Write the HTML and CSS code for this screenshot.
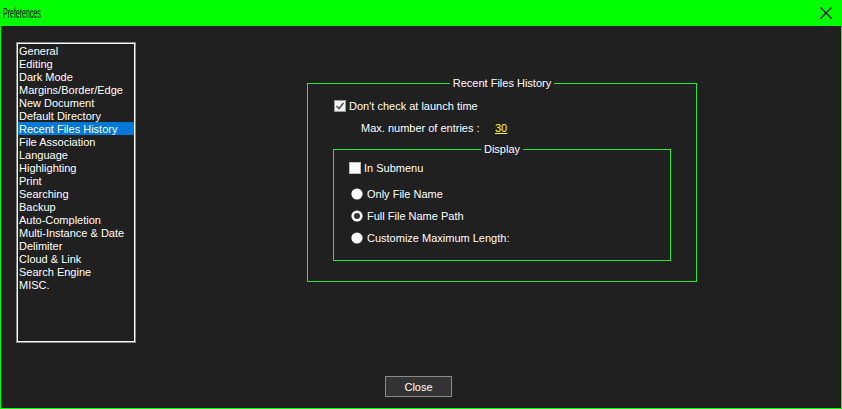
FILE: index.html
```html
<!DOCTYPE html>
<html>
<head>
<meta charset="utf-8">
<link rel="stylesheet" href="styles.css">
<title>Preferences</title>
</head>
<body>
<div class="window">
  <div class="titlebar">
    <span class="title">Preferences</span>
    <svg class="close-x" width="12" height="12" viewBox="0 0 12 12"><path d="M0.5 0.5 L11.5 11.5 M11.5 0.5 L0.5 11.5" stroke="#000" stroke-width="1.1" fill="none"/></svg>
  </div>
  <div class="client">
    <div class="main">
      <div class="listframe">
        <ul class="listbox">
          <li>General</li>
          <li>Editing</li>
          <li>Dark Mode</li>
          <li>Margins/Border/Edge</li>
          <li>New Document</li>
          <li>Default Directory</li>
          <li class="selected">Recent Files History</li>
          <li>File Association</li>
          <li>Language</li>
          <li>Highlighting</li>
          <li>Print</li>
          <li>Searching</li>
          <li>Backup</li>
          <li>Auto-Completion</li>
          <li>Multi-Instance &amp; Date</li>
          <li>Delimiter</li>
          <li>Cloud &amp; Link</li>
          <li>Search Engine</li>
          <li>MISC.</li>
        </ul>
      </div>
      <div class="group outer">
        <span class="group-title">Recent Files History</span>
        <div class="row check-row">
          <svg class="box" width="12" height="12" viewBox="0 0 12 12"><rect x="0.5" y="0.5" width="11" height="11" fill="#f2f2f2" stroke="#9a9a9a"/><path d="M2.5 6 L5 8.5 L9.5 3" stroke="#555" stroke-width="1.6" fill="none"/></svg>
          <span>Don't check at launch time</span>
        </div>
        <div class="row max-row">
          <span class="max-label">Max. number of entries :</span>
          <span class="max-value">30</span>
        </div>
        <div class="group display">
          <span class="group-title">Display</span>
          <div class="row sub-row">
            <svg class="box" width="12" height="12" viewBox="0 0 12 12"><rect x="0.5" y="0.5" width="11" height="11" fill="#ffffff" stroke="#bdbdbd"/></svg>
            <span>In Submenu</span>
          </div>
          <div class="radios">
            <div class="row radio-row">
              <svg class="radio" width="12" height="12" viewBox="0 0 12 12"><circle cx="6" cy="6" r="5.6" fill="#fff"/></svg>
              <span>Only File Name</span>
            </div>
            <div class="row radio-row">
              <svg class="radio" width="12" height="12" viewBox="0 0 12 12"><circle cx="6" cy="6" r="5.6" fill="#fff"/><circle cx="6" cy="6" r="3" fill="#333"/></svg>
              <span>Full File Name Path</span>
            </div>
            <div class="row radio-row">
              <svg class="radio" width="12" height="12" viewBox="0 0 12 12"><circle cx="6" cy="6" r="5.6" fill="#fff"/></svg>
              <span>Customize Maximum Length:</span>
            </div>
          </div>
        </div>
      </div>
    </div>
    <div class="footer">
      <button class="btn">Close</button>
    </div>
  </div>
</div>
</body>
</html>
```
FILE: styles.css
```css
* { box-sizing: border-box; }
html, body {
  margin: 0;
  padding: 0;
  width: 842px;
  height: 409px;
  overflow: hidden;
  background: #202020;
  font-family: "Liberation Sans", Arial, sans-serif;
  font-size: 11px;
  color: #fff;
}
.window {
  width: 842px;
  height: 409px;
  border: 1px solid #00ff00;
  border-top: none;
  display: flex;
  flex-direction: column;
  background: #202020;
}
.titlebar {
  height: 26px;
  margin: 0 -1px;
  background: #00ff00;
  display: flex;
  align-items: center;
  justify-content: space-between;
  padding: 0 10px 0 3px;
  flex: none;
}
.title {
  color: #000;
  font-size: 14px;
  display: inline-block;
  transform: scaleX(0.5);
  transform-origin: left center;
}
.close-x {
  display: block;
  margin-top: -1px;
}
.client {
  flex: 1;
  padding: 16px 0 0 15px;
  display: flex;
  flex-direction: column;
}
.main {
  display: flex;
  align-items: flex-start;
}
.listframe {
  width: 120px;
  height: 301px;
  border: 1px solid #8a8a8a;
  flex: none;
}
.listbox {
  list-style: none;
  margin: 0;
  padding: 0;
  width: 118px;
  height: 299px;
  border: 1px solid #fff;
}
.listbox li {
  height: 13px;
  line-height: 14px;
  padding-left: 1px;
  white-space: nowrap;
}
.listbox li.selected {
  background: #0078d7;
}
.group {
  position: relative;
  border: 1px solid #22e83a;
}
.group-title {
  position: absolute;
  top: -8px;
  left: 0;
  right: 0;
  margin: 0 auto;
  width: max-content;
  padding: 0 3px;
  background: #202020;
  line-height: 14px;
}
.outer {
  margin-left: 171px;
  margin-top: 41px;
  width: 390px;
  height: 199px;
  padding: 16px 0 0 26px;
}
.row {
  display: flex;
  align-items: center;
  white-space: nowrap;
}
.row svg { display: block; flex: none; }
.check-row { height: 12px; gap: 3px; }
.max-row {
  margin-top: 10px;
  padding-left: 27px;
  height: 13px;
  line-height: 13px;
}
.max-label { width: 134px; }
.max-value {
  color: #ffff00;
  text-decoration: underline;
}
.display {
  margin-top: 14px;
  margin-left: -1px;
  width: 338px;
  height: 112px;
  padding: 12px 0 0 15px;
}
.sub-row { height: 12px; gap: 3px; }
.radios {
  margin-top: 14px;
  padding-left: 2px;
  display: flex;
  flex-direction: column;
  gap: 10px;
}
.radio-row { height: 12px; gap: 4px; }
.footer {
  margin-top: 33px;
  padding-left: 369px;
}
.btn {
  display: block;
  width: 67px;
  height: 21px;
  background: #333;
  border: 1px solid #8a8a8a;
  color: #fff;
  font-family: "Liberation Sans", Arial, sans-serif;
  font-size: 11px;
  padding: 0;
}
```
